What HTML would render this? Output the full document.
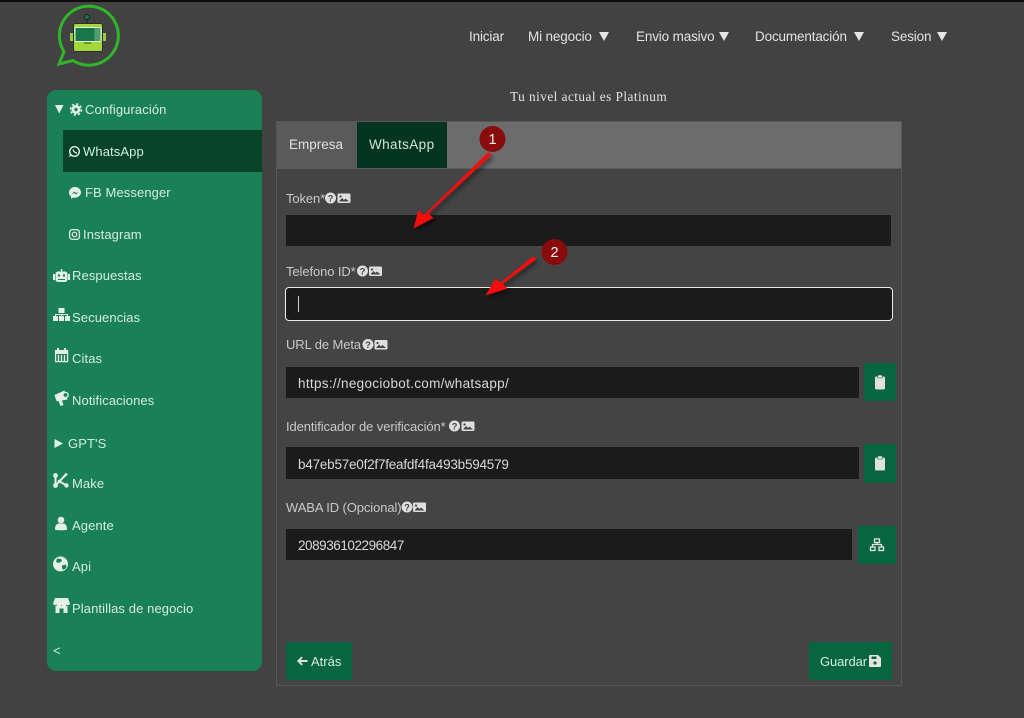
<!DOCTYPE html>
<html lang="es"><head><meta charset="utf-8"><title>Configuración</title>
<style>
html,body{margin:0;padding:0}
body{width:1024px;height:718px;overflow:hidden;background:#424242;position:relative;font-family:"Liberation Sans",sans-serif;color:#ddd}
.a{position:absolute}
.t{position:absolute;white-space:nowrap;line-height:16px;font-size:13px}
.nav{color:#e2e2e2;font-size:13.5px;top:29px;letter-spacing:-.15px}
.side{color:#d6ece0;font-size:13px;letter-spacing:.1px}
.lab{color:#c9c9c9;font-size:13px;letter-spacing:-.1px}
.inp{position:absolute;background:#1b1b1b;height:31px}
.val{color:#d8d8d8;font-size:13.5px}
.btn{position:absolute;background:#07653f}
svg{position:absolute;overflow:visible}
</style></head><body>
<div class="a" style="left:0;top:0;width:1024px;height:2px;background:#0d0d0d"></div>

<!-- logo -->
<svg style="left:50px;top:0" width="80" height="72" viewBox="0 0 80 72">
<path d="M9 64 L14 51.500 A29.500 29.500 0 1 1 23 60.500 Z" fill="none" stroke="#2fb52a" stroke-width="3"/>
<circle cx="37" cy="17" r="2.500" fill="#16794a" stroke="#111" stroke-width=".7"/>
<rect x="36.600" y="19" width=".9" height="4.500" fill="#222"/>
<rect x="20" y="33" width="3.500" height="8" fill="#9ccc3b"/><rect x="52.500" y="33" width="3.500" height="8" fill="#9ccc3b"/>
<rect x="23.500" y="23.500" width="29" height="28" rx="2" fill="#a4d838" stroke="#26302a"/>
<rect x="24.500" y="27" width="27" height="15" rx="2" fill="#e8efe8"/>
<rect x="25.500" y="28" width="19" height="13" fill="#18764b"/><rect x="44.500" y="28" width="6" height="13" fill="#4f9c6f"/>
<rect x="34" y="42.500" width="7" height="1" fill="#3a4a2a"/>
</svg>

<!-- top nav -->
<span class="t nav" style="left:469px">Iniciar</span>
<span class="t nav" style="left:528px">Mi negocio</span>
<span class="t nav" style="left:636px">Envio masivo</span>
<span class="t nav" style="left:755px">Documentación</span>
<span class="t nav" style="left:891px">Sesion</span>
<svg style="left:0;top:0" width="1024" height="60"><g fill="#e6e6e6"><path d="M599 32h10l-5 9z"/><path d="M719 32h10l-5 9z"/><path d="M854 32h10l-5 9z"/><path d="M937 32h10l-5 9z"/></g></svg>

<span class="t" style="left:510px;top:89px;font-family:'Liberation Serif',serif;font-size:13.300px;letter-spacing:.45px;color:#e2e2e2">Tu nivel actual es Platinum</span>

<!-- sidebar -->
<div class="a" style="left:47px;top:90px;width:215px;height:581px;background:#1a8055;border-radius:9px"></div>
<div class="a" style="left:63px;top:130px;width:199px;height:42px;background:#074326"></div>
<svg style="left:0;top:0" width="270" height="680" fill="#e4efe9">
<path d="M55 105h8.500l-4.250 8.500z"/>
<circle cx="76" cy="109.500" r="4.500"/><circle cx="76" cy="109.500" r="5.500" fill="none" stroke="#e4efe9" stroke-width="1.600" stroke-dasharray="2.300 2"/><circle cx="76" cy="109.500" r="1.700" fill="#1a8055"/>
<circle cx="74.500" cy="151.500" r="4.800" fill="none" stroke="#e4efe9" stroke-width="1.400"/><path d="M69 157l1.300-3.800 2 2.200z"/><path d="M73 149.500l.8 2 2.200 1.500 1-.5" fill="none" stroke="#e4efe9" stroke-width="1.200"/>
<path d="M75 187c-3.400 0-6 2.400-6 5.500 0 1.700.8 3.100 2 4.100v2.200l2.100-1.200c3.900.8 7.900-1.600 7.900-5.100 0-3.100-2.600-5.500-6-5.500z"/><path d="M71.500 194.500l2.500-3 2 1.500 2.500-1.500-2.500 3-2-1.500z" fill="#1a8055"/>
<rect x="69.600" y="229.600" width="9.800" height="9.800" rx="2.800" fill="none" stroke="#e4efe9" stroke-width="1.300"/><circle cx="74.500" cy="234.500" r="2.300" fill="none" stroke="#e4efe9" stroke-width="1.200"/>
<!-- robot -->
<rect x="55.500" y="271.500" width="12" height="10.500" rx="2.500"/><rect x="53" y="274" width="2" height="6"/><rect x="68" y="274" width="2" height="6"/><rect x="60.800" y="269" width="1.500" height="3"/><circle cx="59" cy="275.500" r="1.200" fill="#1a8055"/><circle cx="64" cy="275.500" r="1.200" fill="#1a8055"/><rect x="58" y="279" width="7" height="1" fill="#1a8055"/>
<!-- sitemap -->
<rect x="58.500" y="308" width="6" height="5"/><rect x="53" y="316" width="5" height="5"/><rect x="59" y="316" width="5" height="5"/><rect x="65" y="316" width="5" height="5"/><path d="M55 316v-2h13v2h-1v-1H62v1h-1v-1h-5v1z"/>
<!-- calendar -->
<path d="M55.600 351h12v10.600h-12z" fill="none" stroke="#e4efe9" stroke-width="1.300"/><rect x="55" y="350" width="13" height="4"/><rect x="57" y="348" width="2" height="3"/><rect x="64" y="348" width="2" height="3"/><path d="M58.500 355v6M61.500 355v6M64.500 355v6" stroke="#e4efe9" stroke-width="1.300"/>
<!-- bullhorn -->
<path d="M54.500 395l10-4.500 3 9-5.500 1 1.500 4.500-3 1-2-5-2 .3z"/><circle cx="65.500" cy="395" r="2.600" fill="#1a8055" stroke="#e4efe9" stroke-width="1.400"/>
<path d="M54.500 439l8.500 4.500-8.500 4.500z"/>
<!-- make -->
<circle cx="55.500" cy="475.500" r="2.400"/><circle cx="55.500" cy="485.500" r="2.400"/><circle cx="66.500" cy="485.500" r="2.200"/><circle cx="66" cy="474.500" r="1.400"/><path d="M55.500 475.500v10L66 474.500M58 480.500l8.500 5" fill="none" stroke="#e4efe9" stroke-width="2"/>
<!-- user -->
<circle cx="61" cy="520" r="3.300"/><path d="M55 529.500c0-4.500 2-6 3.500-6h5c1.500 0 3.500 1.500 3.500 6 0 1-12 1-12 0z"/>
<!-- globe -->
<circle cx="60.500" cy="564" r="7.500"/><path d="M57 558.500l4 .5 1 2-3 2-3-1zM62 565.500l4-1 .5 3-3 2.500-1.500-2z" fill="#1a8055"/>
<!-- store -->
<path d="M55 598h13l2 5.500a2 2 0 0 1-3.500 1 2.500 2.500 0 0 1-5 0 2.500 2.500 0 0 1-5 0 2 2 0 0 1-3.500-1z"/><path d="M55.500 606h12v7h-4v-4.500h-4v4.500h-4z"/>
</svg>
<span class="t side" style="left:85px;top:102px">Configuración</span>
<span class="t side" style="left:83px;top:144px">WhatsApp</span>
<span class="t side" style="left:85px;top:185px">FB Messenger</span>
<span class="t side" style="left:83px;top:227px">Instagram</span>
<span class="t side" style="left:72px;top:268px">Respuestas</span>
<span class="t side" style="left:72px;top:310px">Secuencias</span>
<span class="t side" style="left:72px;top:351px">Citas</span>
<span class="t side" style="left:72px;top:393px">Notificaciones</span>
<span class="t side" style="left:68px;top:436px">GPT'S</span>
<span class="t side" style="left:72px;top:476px">Make</span>
<span class="t side" style="left:72px;top:518px">Agente</span>
<span class="t side" style="left:72px;top:559px">Api</span>
<span class="t side" style="left:72px;top:601px">Plantillas de negocio</span>
<span class="t side" style="left:53px;top:643px">&lt;</span>

<!-- card -->
<div class="a" style="left:276px;top:121px;width:624px;height:563px;border:1px solid #575757;background:#444"></div>
<div class="a" style="left:277px;top:122px;width:624px;height:46px;background:#6c6c6c;border-bottom:1px solid #5b5b5b"></div>
<div class="a" style="left:277px;top:122px;width:80px;height:46px;background:#5a5a5a"></div>
<div class="a" style="left:357px;top:122px;width:90px;height:46px;background:#053420"></div>
<span class="t" style="left:289px;top:137px;font-size:13.500px;color:#e0e0e0">Empresa</span>
<span class="t" style="left:369px;top:137px;font-size:13.500px;letter-spacing:.4px;color:#cfe5de">WhatsApp</span>

<span class="t lab" style="left:286px;top:191px">Token*</span>
<span class="t lab" style="left:286px;top:264px">Telefono ID*</span>
<span class="t lab" style="left:286px;top:337px">URL de Meta</span>
<span class="t lab" style="left:286px;top:419px">Identificador de verificación*</span>
<span class="t lab" style="left:286px;top:500px">WABA ID (Opcional)</span>

<svg style="left:0;top:0" width="1024" height="718">
<defs>
<g id="q"><circle cx="5.500" cy="5.500" r="5.500" fill="#dedede"/><text x="5.500" y="9" font-size="9.500" font-weight="bold" text-anchor="middle" fill="#444" font-family="Liberation Sans">?</text></g>
<g id="p"><rect width="13" height="9.500" rx="1.200" fill="#dedede"/><path d="M1.500 8l3-3.500 2 2 1.500-1.500 3.500 3z" fill="#444"/><circle cx="3" cy="3" r="1.100" fill="#444"/></g>
</defs>
<use href="#q" x="325" y="192.500"/><use href="#p" x="337.500" y="193.500"/>
<use href="#q" x="357" y="265.500"/><use href="#p" x="369" y="266.500"/>
<use href="#q" x="362.500" y="339"/><use href="#p" x="374.500" y="340"/>
<use href="#q" x="449" y="420.500"/><use href="#p" x="461.500" y="421.500"/>
<use href="#q" x="401.500" y="501.500"/><use href="#p" x="413" y="502.500"/>
</svg>

<!-- inputs -->
<div class="inp" style="left:286px;top:215px;width:605px"></div>
<div class="a" style="left:285px;top:287px;width:606px;height:32px;background:#1b1b1b;border:1px solid #ececec;border-radius:4px"></div>
<div class="a" style="left:298px;top:296px;width:1px;height:16px;background:#cfcfcf"></div>
<div class="inp" style="left:286px;top:367px;width:573px"></div>
<div class="inp" style="left:286px;top:447px;width:573px;height:32px"></div>
<div class="inp" style="left:286px;top:529px;width:566px"></div>
<span class="t val" style="left:298px;top:376px;letter-spacing:.31px">https://negociobot.com/whatsapp/</span>
<span class="t val" style="left:298px;top:457px;letter-spacing:-.22px">b47eb57e0f2f7feafdf4fa493b594579</span>
<span class="t val" style="left:298px;top:538px;letter-spacing:-.45px">208936102296847</span>

<div class="btn" style="left:864px;top:363px;width:32px;height:38px"></div>
<div class="btn" style="left:864px;top:444px;width:32px;height:39px"></div>
<div class="btn" style="left:858px;top:526px;width:38px;height:38px"></div>
<div class="btn" style="left:286px;top:642px;width:66px;height:38px"></div>
<div class="btn" style="left:809px;top:642px;width:83px;height:38px"></div>

<svg style="left:0;top:0" width="1024" height="718">
<g transform="translate(880 382)"><rect x="-5" y="-5.500" width="10" height="13" rx="1.500" fill="#e0e0e0"/><rect x="-2.500" y="-7" width="5" height="3" rx=".8" fill="#e0e0e0" stroke="#07653f" stroke-width=".6"/></g>
<g transform="translate(880 463)"><rect x="-5" y="-5.500" width="10" height="13" rx="1.500" fill="#e0e0e0"/><rect x="-2.500" y="-7" width="5" height="3" rx=".8" fill="#e0e0e0" stroke="#07653f" stroke-width=".6"/></g>
<g fill="none" stroke="#e4e4e4" stroke-width="1.300"><rect x="874.500" y="539" width="5" height="3.500"/><rect x="870.500" y="547" width="4.500" height="3.500"/><rect x="879" y="547" width="4.500" height="3.500"/><path d="M877 542.500v2M872.500 547v-2.500h9v2.500"/></g>
<path d="M297 661l4.500-4.500 1.300 1.300-2.300 2.200h7v2h-7l2.300 2.200-1.300 1.300z" fill="#e4e4e4"/>
<path d="M870 655h8l3 3v8a1 1 0 0 1-1 1h-10a1 1 0 0 1-1-1v-10a1 1 0 0 1 1-1z" fill="#e4e4e4"/><rect x="871.500" y="656.500" width="5" height="2.500" fill="#07653f"/><circle cx="875" cy="663" r="1.600" fill="#07653f"/>
</svg>
<span class="t" style="left:311px;top:654px;font-size:13px;color:#d6ece0">Atrás</span>
<span class="t" style="left:820px;top:654px;font-size:13px;letter-spacing:-.1px;color:#d6ece0">Guardar</span>

<!-- annotations -->
<svg style="left:0;top:0" width="1024" height="718">
<defs><filter id="sh" x="-20%" y="-20%" width="150%" height="150%"><feDropShadow dx="2" dy="3" stdDeviation="2" flood-color="#000" flood-opacity=".5"/></filter></defs>
<g filter="url(#sh)" fill="#f40d0d">
<path d="M488.500 152l3 3-63 58.500 5 4.500-20 10.500 5-18.500 5.500 5z"/>
<path d="M533.500 256l2.600 3.400-33.600 24.600 5 4.500-22 7 10-17 5 4z"/>
</g>
<circle cx="492.500" cy="139" r="13" fill="#8a0b0b"/>
<circle cx="554.500" cy="252" r="13" fill="#8a0b0b"/>
<text x="492.500" y="144" font-size="14.500" text-anchor="middle" fill="#f2f2f2" font-family="Liberation Sans">1</text>
<text x="554.500" y="257" font-size="14.500" text-anchor="middle" fill="#f2f2f2" font-family="Liberation Sans">2</text>
</svg>
</body></html>
